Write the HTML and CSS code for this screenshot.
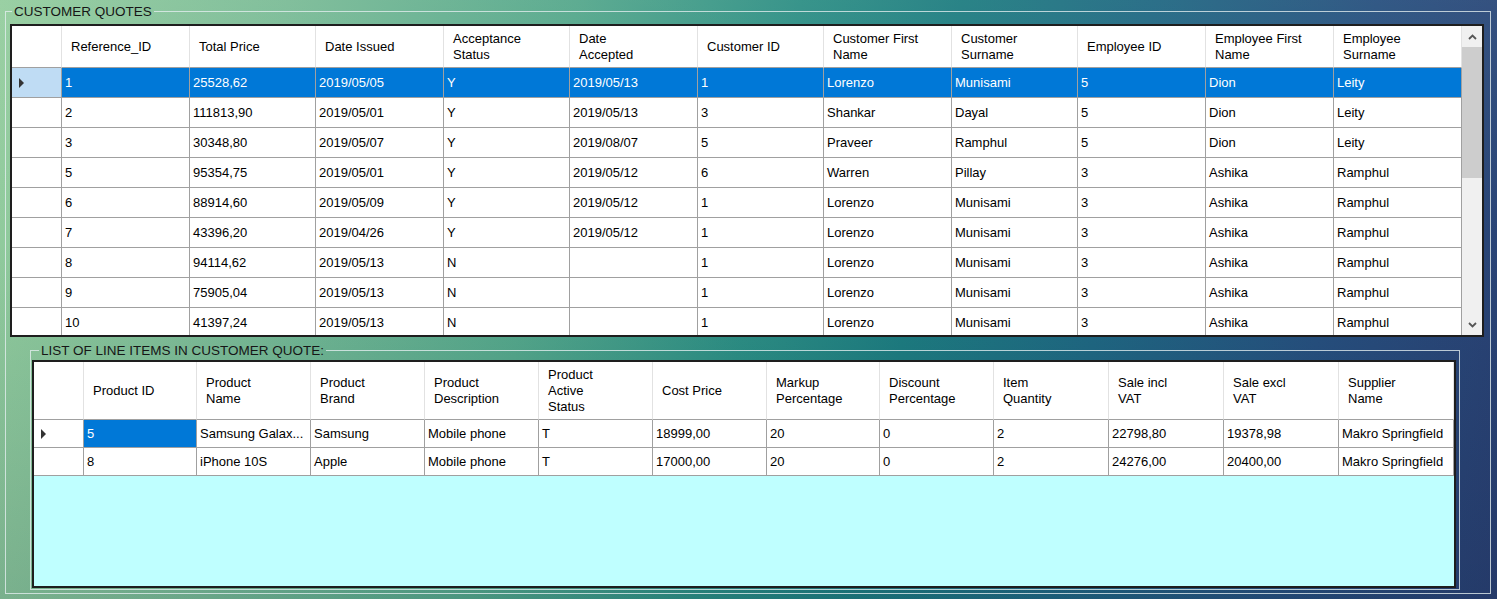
FILE: index.html
```html
<!DOCTYPE html>
<html lang="en">
<head>
<meta charset="utf-8">
<title>Customer Quotes</title>
<link rel="stylesheet" href="styles.css">
</head>
<body>
<fieldset class="group">
  <legend>CUSTOMER QUOTES</legend>
  <div class="dgv dgv-top">
    <div class="rows">
      <div class="r h">
        <div class="c rh"></div>
        <div class="c">Reference_ID</div>
        <div class="c">Total Price</div>
        <div class="c">Date Issued</div>
        <div class="c">Acceptance<br>Status</div>
        <div class="c">Date<br>Accepted</div>
        <div class="c">Customer ID</div>
        <div class="c">Customer First<br>Name</div>
        <div class="c">Customer<br>Surname</div>
        <div class="c">Employee ID</div>
        <div class="c">Employee First<br>Name</div>
        <div class="c">Employee<br>Surname</div>
      </div>
      <div class="r sel">
        <div class="c rh"><span class="tri"></span></div>
        <div class="c">1</div><div class="c">25528,62</div><div class="c">2019/05/05</div><div class="c">Y</div><div class="c">2019/05/13</div><div class="c">1</div><div class="c">Lorenzo</div><div class="c">Munisami</div><div class="c">5</div><div class="c">Dion</div><div class="c">Leity</div>
      </div>
      <div class="r">
        <div class="c rh"></div>
        <div class="c">2</div><div class="c">111813,90</div><div class="c">2019/05/01</div><div class="c">Y</div><div class="c">2019/05/13</div><div class="c">3</div><div class="c">Shankar</div><div class="c">Dayal</div><div class="c">5</div><div class="c">Dion</div><div class="c">Leity</div>
      </div>
      <div class="r">
        <div class="c rh"></div>
        <div class="c">3</div><div class="c">30348,80</div><div class="c">2019/05/07</div><div class="c">Y</div><div class="c">2019/08/07</div><div class="c">5</div><div class="c">Praveer</div><div class="c">Ramphul</div><div class="c">5</div><div class="c">Dion</div><div class="c">Leity</div>
      </div>
      <div class="r">
        <div class="c rh"></div>
        <div class="c">5</div><div class="c">95354,75</div><div class="c">2019/05/01</div><div class="c">Y</div><div class="c">2019/05/12</div><div class="c">6</div><div class="c">Warren</div><div class="c">Pillay</div><div class="c">3</div><div class="c">Ashika</div><div class="c">Ramphul</div>
      </div>
      <div class="r">
        <div class="c rh"></div>
        <div class="c">6</div><div class="c">88914,60</div><div class="c">2019/05/09</div><div class="c">Y</div><div class="c">2019/05/12</div><div class="c">1</div><div class="c">Lorenzo</div><div class="c">Munisami</div><div class="c">3</div><div class="c">Ashika</div><div class="c">Ramphul</div>
      </div>
      <div class="r">
        <div class="c rh"></div>
        <div class="c">7</div><div class="c">43396,20</div><div class="c">2019/04/26</div><div class="c">Y</div><div class="c">2019/05/12</div><div class="c">1</div><div class="c">Lorenzo</div><div class="c">Munisami</div><div class="c">3</div><div class="c">Ashika</div><div class="c">Ramphul</div>
      </div>
      <div class="r">
        <div class="c rh"></div>
        <div class="c">8</div><div class="c">94114,62</div><div class="c">2019/05/13</div><div class="c">N</div><div class="c"></div><div class="c">1</div><div class="c">Lorenzo</div><div class="c">Munisami</div><div class="c">3</div><div class="c">Ashika</div><div class="c">Ramphul</div>
      </div>
      <div class="r">
        <div class="c rh"></div>
        <div class="c">9</div><div class="c">75905,04</div><div class="c">2019/05/13</div><div class="c">N</div><div class="c"></div><div class="c">1</div><div class="c">Lorenzo</div><div class="c">Munisami</div><div class="c">3</div><div class="c">Ashika</div><div class="c">Ramphul</div>
      </div>
      <div class="r">
        <div class="c rh"></div>
        <div class="c">10</div><div class="c">41397,24</div><div class="c">2019/05/13</div><div class="c">N</div><div class="c"></div><div class="c">1</div><div class="c">Lorenzo</div><div class="c">Munisami</div><div class="c">3</div><div class="c">Ashika</div><div class="c">Ramphul</div>
      </div>
    </div>
    <div class="vs">
      <div class="vs-btn"><svg width="9" height="6" viewBox="0 0 9 6"><polyline points="1,5 4.5,1.5 8,5" fill="none" stroke="#555" stroke-width="1.8"/></svg></div>
      <div class="vs-thumb"></div>
      <div class="vs-track"></div>
      <div class="vs-btn"><svg width="9" height="6" viewBox="0 0 9 6"><polyline points="1,1 4.5,4.5 8,1" fill="none" stroke="#555" stroke-width="1.8"/></svg></div>
    </div>
  </div>

  <fieldset class="group group-inner">
    <legend>LIST OF LINE ITEMS IN CUSTOMER QUOTE:</legend>
    <div class="dgv dgv-bottom">
      <div class="rows">
        <div class="r h">
          <div class="c rh"></div>
          <div class="c">Product ID</div>
          <div class="c">Product<br>Name</div>
          <div class="c">Product<br>Brand</div>
          <div class="c">Product<br>Description</div>
          <div class="c">Product<br>Active<br>Status</div>
          <div class="c">Cost Price</div>
          <div class="c">Markup<br>Percentage</div>
          <div class="c">Discount<br>Percentage</div>
          <div class="c">Item<br>Quantity</div>
          <div class="c">Sale incl<br>VAT</div>
          <div class="c">Sale excl<br>VAT</div>
          <div class="c">Supplier<br>Name</div>
        </div>
        <div class="r">
          <div class="c rh"><span class="tri"></span></div>
          <div class="c cur">5</div><div class="c">Samsung Galax...</div><div class="c">Samsung</div><div class="c">Mobile phone</div><div class="c">T</div><div class="c">18999,00</div><div class="c">20</div><div class="c">0</div><div class="c">2</div><div class="c">22798,80</div><div class="c">19378,98</div><div class="c">Makro Springfield</div>
        </div>
        <div class="r">
          <div class="c rh"></div>
          <div class="c">8</div><div class="c">iPhone 10S</div><div class="c">Apple</div><div class="c">Mobile phone</div><div class="c">T</div><div class="c">17000,00</div><div class="c">20</div><div class="c">0</div><div class="c">2</div><div class="c">24276,00</div><div class="c">20400,00</div><div class="c">Makro Springfield</div>
        </div>
      </div>
    </div>
  </fieldset>
</fieldset>
</body>
</html>
```

FILE: styles.css
```css
html {
  height: 100%;
  background:
    linear-gradient(180deg, rgba(255,255,255,0.06) 0%, rgba(0,0,0,0) 40%, rgba(0,20,40,0.12) 100%),
    linear-gradient(100deg, #94cd9e 0%, #7abb96 18%, #54a78b 36%, #2c8e84 50%, #1d7c80 60%, #1f6782 72%, #264f7e 86%, #2a3f72 100%);
}

body {
  margin: 0;
  font-family: "Liberation Sans", Arial, sans-serif;
  font-size: 13px;
  color: #000;
}

.group {
  margin: 4px 6px 0 5px;
  padding: 0 0 3px 0;
  border: 1px solid rgba(228, 238, 240, 0.78);
  min-inline-size: 0;
}

.group > legend {
  margin-left: 6px;
  padding: 0 2px;
  font-size: 13.5px;
  line-height: 15px;
  color: #161616;
}

.group-inner {
  margin: 6px 30px 0 24px;
  padding: 0 3px 1px 1px;
}

.group-inner > legend {
  margin-left: 7px;
}

.dgv {
  box-sizing: border-box;
  border: 2px solid #1e1e1e;
  background: #fff;
  display: flex;
  overflow: hidden;
}

.dgv-top {
  margin: 5px 6px 0 4px;
  height: 313px;
}

.dgv-bottom {
  margin-top: 2px;
  height: 228px;
  background: #bfffff;
}

.rows {
  flex: 1;
  min-width: 0;
  display: flex;
  flex-direction: column;
}

.r {
  display: grid;
  flex: none;
}

.dgv-top .r {
  grid-template-columns: 50px 128px 126px 128px 126px 128px 126px 128px 126px 128px 128px 128px;
  height: 30px;
}

.dgv-top .r.h {
  height: 42px;
}

.dgv-bottom .r {
  grid-template-columns: 50px 113px 114px 114px 114px 114px 114px 113px 114px 115px 115px 115px 115px;
  height: 28px;
}

.dgv-bottom .r.h {
  height: 58px;
}

.c {
  box-sizing: border-box;
  border-right: 1px solid #a0a0a0;
  border-bottom: 1px solid #a0a0a0;
  padding-left: 3px;
  display: flex;
  align-items: center;
  white-space: nowrap;
  overflow: hidden;
  background: #fff;
  line-height: 16px;
}

.h .c {
  border-right-color: #e2e2e2;
  padding-left: 9px;
}

.c.rh {
  padding-left: 7px;
}

.sel .c {
  background: #0078d7;
  color: #fff;
}

.sel .c.rh {
  background: #bfdcf4;
}

.c.cur {
  background: #0078d7;
  color: #fff;
}

.tri {
  width: 0;
  height: 0;
  border-left: 5px solid #333;
  border-top: 5px solid transparent;
  border-bottom: 5px solid transparent;
}

.vs {
  width: 20px;
  flex: none;
  background: #f0f0f0;
  display: flex;
  flex-direction: column;
}

.vs-btn {
  height: 21px;
  flex: none;
  display: flex;
  align-items: center;
  justify-content: center;
}

.vs-thumb {
  height: 131px;
  flex: none;
  background: #cdcdcd;
}

.vs-track {
  flex: 1;
}
```
